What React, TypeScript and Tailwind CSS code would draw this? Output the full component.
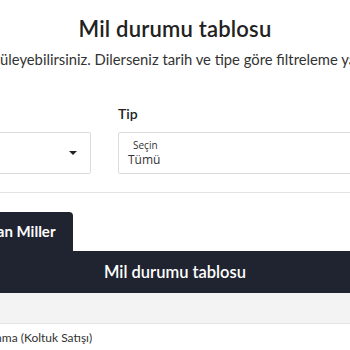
import React from "react";

const font = { fontFamily: "Lato, 'Noto Sans', sans-serif" };

const App = () => {
  return (
    <div
      className="w-[350px] h-[350px] overflow-hidden bg-white text-[#222]"
      style={font}
    >
      <h1 className="pt-[14px] text-center text-[22px] leading-[30px] font-semibold tracking-[0.2px]">
        Mil durumu tablosu
      </h1>
      <div className="mt-[5px] flex justify-center">
        <p className="mr-[200px] whitespace-nowrap text-[14.8px] leading-[20px] text-[#333]">
          Aşağıdaki tablodan mil durumunuzu görüntüleyebilirsiniz. Dilerseniz tarih ve tipe göre filtreleme yapabilirsiniz.
        </p>
      </div>

      <div className="mt-[35px] ml-[-110px] flex gap-[27px]">
        <div className="flex w-[201px] shrink-0 flex-col">
          <label className="h-[20px] text-[14px] leading-[20px] font-semibold">Tarih</label>
          <div className="mt-[8px] flex h-[42px] items-center justify-end rounded-[2px] border border-[#dcdcdc] pr-[13px]">
            <span className="h-0 w-0 border-x-[4px] border-t-[4px] border-x-transparent border-t-[#222]" />
          </div>
        </div>
        <div className="flex w-[300px] shrink-0 flex-col">
          <label className="h-[20px] text-[14px] leading-[20px] font-semibold">Tip</label>
          <div
            className="mt-[8px] flex h-[42px] flex-col justify-center rounded-[2px] border border-[#dcdcdc] pl-[9px]"
            style={{ fontFamily: "'Open Sans', sans-serif" }}
          >
            <span className="pl-[5px] text-[10px] leading-[13px] text-[#333]">Seçin</span>
            <span className="text-[12px] leading-[16px] text-[#333]">Tümü</span>
          </div>
        </div>
      </div>

      <div className="mt-[18px] h-px bg-[#e3e3e3]" />

      <div className="mt-[19px] flex">
        <div className="ml-[-64px] flex h-[39px] items-center rounded-tr-[4px] bg-[#1f2430] pr-[18px] pl-[16px] text-[15px] font-bold text-white">
          Jonathan Miller
        </div>
      </div>
      <div className="flex h-[42px] items-center justify-center bg-[#1f2430] text-[16.5px] font-semibold text-white">
        Mil durumu tablosu
      </div>
      <div className="h-[31px] border-b border-[#e4e4e4] bg-[#f3f3f3]" />
      <div className="mt-[5px] ml-[-50px] whitespace-nowrap text-[12px] leading-[18px] text-[#333]">
        Mil Kazanma (Koltuk Satışı)
      </div>
    </div>
  );
};

export default App;
